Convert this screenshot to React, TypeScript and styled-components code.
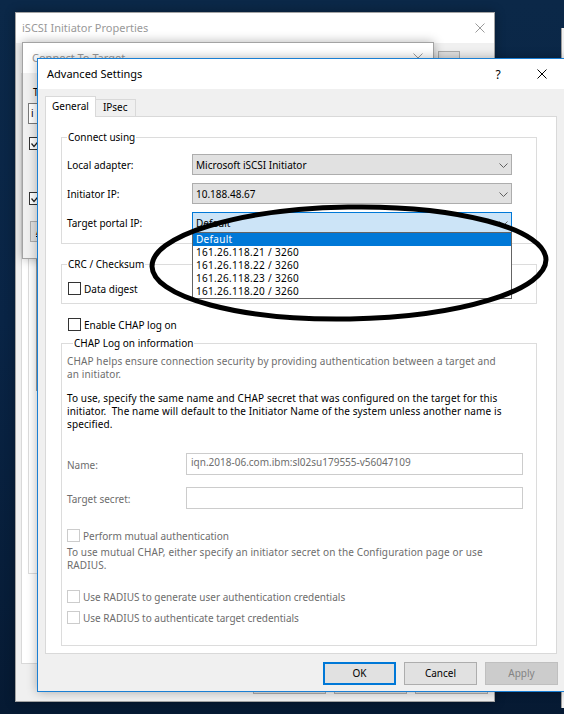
import React from 'react';
import styled, { createGlobalStyle } from 'styled-components';

const UI_FONT = `"Noto Sans", "Open Sans", "Liberation Sans", sans-serif`;

const GlobalStyle = createGlobalStyle`
  html, body { margin: 0; padding: 0; }
  body {
    background: #07203b;
    font-family: ${UI_FONT};
    font-size: 10px;
    line-height: 13px;
    color: #000;
    overflow: hidden;
  }
  *, *::before, *::after { box-sizing: border-box; }
`;

const Desktop = styled.div`
  position: relative;
  width: 564px;
  height: 714px;
  overflow: hidden;
  background: linear-gradient(180deg, #0b2848 0%, #092445 45%, #061a33 100%);
`;

const BackWindow = styled.div`
  position: absolute;
  left: 561px;
  top: 28px;
  width: 20px;
  height: 680px;
  background: #f0f0f0;
  border-left: 1px solid #9d9d9d;
`;

const Frame = styled.div<{ $x: number; $y: number; $w: number; $h: number; $active?: boolean }>`
  position: absolute;
  left: ${p => p.$x}px;
  top: ${p => p.$y}px;
  width: ${p => p.$w}px;
  height: ${p => p.$h}px;
  display: flex;
  flex-direction: column;
  background: #f0f0f0;
  border: 1px solid ${p => (p.$active ? '#1a7fd4' : '#a3a3a3')};
  box-shadow: 0 0 10px rgba(0, 0, 0, 0.3);
`;

const TitleBar = styled.div`
  flex: none;
  height: 30px;
  display: flex;
  align-items: center;
  background: #fff;
`;

const TitleText = styled.div<{ $active?: boolean; $inset: number }>`
  flex: 1;
  min-width: 0;
  padding-left: ${p => p.$inset}px;
  padding-bottom: 1px;
  font-size: 11px;
  color: ${p => (p.$active ? '#000' : '#999')};
  white-space: nowrap;
  overflow: hidden;
`;

const CaptionButton = styled.div<{ $w: number }>`
  flex: none;
  width: ${p => p.$w}px;
  height: 30px;
  display: flex;
  align-items: center;
  justify-content: center;
  font-size: 12px;
  color: #000;
`;

const CloseGlyph = ({ color }: { color: string }) => (
  <svg width="10" height="10" viewBox="0 0 10 10">
    <path d="M0.5 0.5 L9.5 9.5 M9.5 0.5 L0.5 9.5" stroke={color} strokeWidth="1" fill="none" />
  </svg>
);

const Chevron = () => (
  <svg width="9" height="5" viewBox="0 0 9 5">
    <path d="M0.5 0.5 L4.5 4.5 L8.5 0.5" stroke="#606060" strokeWidth="1" fill="none" />
  </svg>
);

const CheckMark = () => (
  <svg width="11" height="11" viewBox="0 0 11 11">
    <path d="M1.5 5.5 L4 8.5 L9.5 2" stroke="#222" strokeWidth="1.2" fill="none" />
  </svg>
);

/* ---------- shared controls ---------- */

const Box = styled.span<{ $disabled?: boolean }>`
  flex: none;
  width: 13px;
  height: 13px;
  display: inline-flex;
  align-items: center;
  justify-content: center;
  background: #fff;
  border: 1px solid ${p => (p.$disabled ? '#cccccc' : '#333333')};
`;

const CheckRow = styled.div<{ $mt?: number; $ml?: number; $disabled?: boolean }>`
  display: flex;
  align-items: center;
  gap: 3px;
  height: 13px;
  margin-top: ${p => p.$mt ?? 0}px;
  margin-left: ${p => p.$ml ?? 0}px;
  color: ${p => (p.$disabled ? '#6d6d6d' : '#000')};
  white-space: nowrap;
`;

const CheckText = styled.span`
  padding-top: 1px;
`;

const PushButton = styled.div<{ $kind?: 'default' | 'normal' | 'disabled'; $w?: number }>`
  flex: none;
  width: ${p => p.$w ?? 73}px;
  height: 23px;
  display: flex;
  align-items: center;
  justify-content: center;
  white-space: nowrap;
  background: ${p => (p.$kind === 'disabled' ? '#cccccc' : '#e1e1e1')};
  color: ${p => (p.$kind === 'disabled' ? '#838383' : '#000')};
  border: ${p =>
    p.$kind === 'default' ? '2px solid #0078d7' : p.$kind === 'disabled' ? '1px solid #bfbfbf' : '1px solid #adadad'};
`;

/* ---------- iSCSI Initiator Properties (back) ---------- */

const MainBody = styled.div`
  flex: 1;
  display: flex;
  flex-direction: column;
  padding: 8px 0 7px 5px;
`;

const MainTopRow = styled.div`
  display: flex;
  justify-content: flex-end;
  padding-right: 34px;
  height: 22px;
`;

const SmallButton = styled.div`
  width: 22px;
  height: 22px;
  border: 1px solid #adadad;
  background: #e1e1e1;
`;

const MainTabPanel = styled.div`
  flex: 1;
  display: flex;
  flex-direction: column;
  margin-right: 5px;
  padding: 20px 6px 89px 6px;
  background: #fff;
  border: 1px solid #d9d9d9;
`;

const MainGroup = styled.div`
  flex: 1;
  display: flex;
  flex-direction: column;
  padding: 20px 8px 182px 7px;
  border: 1px solid #dcdcdc;
`;

const MainList = styled.div`
  flex: 1;
  border: 1px solid #a0a0a0;
  background: #fff;
`;

const MainButtons = styled.div`
  display: flex;
  justify-content: flex-end;
  gap: 8px;
  margin-top: 7px;
  padding-right: 6px;
`;

/* ---------- Connect To Target (middle) ---------- */

const ConnectBody = styled.div`
  flex: 1;
  display: flex;
  flex-direction: column;
  align-items: flex-start;
  padding: 12px 10px 0 5px;
`;

const ConnectLabel = styled.div`
  margin-left: 5px;
  height: 14px;
  line-height: 14px;
`;

const ConnectInput = styled.div`
  margin-top: 4px;
  width: 390px;
  height: 21px;
  display: flex;
  align-items: center;
  padding-left: 2px;
  background: #fff;
  border: 1px solid #7a7a7a;
  white-space: nowrap;
`;

const ConnectButton = styled(PushButton)`
  margin-top: 16px;
  margin-left: 2px;
  width: 90px;
  height: 21px;
  justify-content: flex-start;
  padding-left: 5px;
`;

const Accel = styled.span`
  text-decoration: underline;
`;

/* ---------- Advanced Settings (front) ---------- */

const DialogBody = styled.div`
  flex: 1;
  display: flex;
  flex-direction: column;
  padding: 7px 6px 6px 7px;
`;

const TabRow = styled.div`
  display: flex;
  align-items: flex-end;
  height: 21px;
  margin-bottom: -1px;
  margin-right: 1px;
  position: relative;
  z-index: 1;
`;

const Tab = styled.div<{ $selected?: boolean }>`
  height: ${p => (p.$selected ? 21 : 18)}px;
  display: flex;
  align-items: center;
  padding: ${p => (p.$selected ? '0 6px 2px' : '0 7px 1px')};
  background: ${p => (p.$selected ? '#fff' : '#f0f0f0')};
  border: 1px solid #d9d9d9;
  border-bottom: ${p => (p.$selected ? 'none' : '1px solid #d9d9d9')};
  border-left: ${p => (p.$selected ? '1px solid #d9d9d9' : 'none')};
`;

const TabPanel = styled.div`
  flex: 1;
  display: flex;
  flex-direction: column;
  margin-right: 1px;
  padding: 13px 19px 0 15px;
  background: #fff;
  border: 1px solid #d9d9d9;
`;

const Group = styled.fieldset<{ $mt?: number; $pt: number; $pb: number; $pr: number }>`
  margin: ${p => p.$mt ?? 0}px 0 0 0;
  padding: ${p => p.$pt}px ${p => p.$pr}px ${p => p.$pb}px 5px;
  border: 1px solid #dcdcdc;
  min-width: 0;
`;

const Legend = styled.legend<{ $indent?: number }>`
  padding: 0 1px;
  margin-left: ${p => p.$indent ?? 0}px;
  font-size: 10px;
  line-height: 14px;
  color: #000;
`;

const FieldRow = styled.div<{ $label: number; $mt?: number }>`
  display: grid;
  grid-template-columns: ${p => p.$label}px auto;
  justify-content: start;
  align-items: center;
  margin-top: ${p => p.$mt ?? 0}px;
`;

const FieldLabel = styled.span<{ $muted?: boolean }>`
  padding-top: 2px;
  color: ${p => (p.$muted ? '#6d6d6d' : '#000')};
  white-space: nowrap;
`;

const Combo = styled.div<{ $focused?: boolean }>`
  position: relative;
  width: 320px;
  height: 21px;
  display: flex;
  align-items: center;
  padding: 1px 3px 0 3px;
  background: ${p => (p.$focused ? '#cce4f7' : '#e1e1e1')};
  border: 1px solid ${p => (p.$focused ? '#0078d7' : '#adadad')};
`;

const ComboValue = styled.span`
  flex: 1;
  white-space: nowrap;
`;

const PopupList = styled.ul`
  position: absolute;
  left: -1px;
  top: 19px;
  width: 320px;
  margin: 0;
  padding: 0;
  list-style: none;
  background: #fff;
  border: 1px solid #646464;
  z-index: 5;
`;

const PopupItem = styled.li<{ $selected?: boolean }>`
  height: 13px;
  line-height: 13px;
  padding-left: 3px;
  white-space: nowrap;
  letter-spacing: 0.3px;
  background: ${p => (p.$selected ? '#0078d7' : 'transparent')};
  color: ${p => (p.$selected ? '#fff' : '#000')};
`;

const Note = styled.p<{ $muted?: boolean; $mt?: number }>`
  margin: ${p => p.$mt ?? 0}px 0 0 0;
  color: ${p => (p.$muted ? '#6d6d6d' : '#000')};
  line-height: 13px;
  letter-spacing: 0.12px;
  white-space: nowrap;
`;

const TextBox = styled.div`
  width: 337px;
  height: 22px;
  padding: 2px 0 0 4px;
  background: #fff;
  border: 1px solid #cccccc;
  color: #6d6d6d;
  white-space: nowrap;
  overflow: hidden;
`;

const DialogButtons = styled.div`
  display: flex;
  justify-content: flex-end;
  gap: 8px;
  margin-top: 8px;
`;

const Annotation = styled.svg`
  position: absolute;
  left: 0;
  top: 0;
  z-index: 20;
  pointer-events: none;
`;

const portals = ['161.26.118.21 / 3260', '161.26.118.22 / 3260', '161.26.118.23 / 3260', '161.26.118.20 / 3260'];

export default function App() {
  return (
    <>
      <GlobalStyle />
      <Desktop>
        <BackWindow />

        <Frame $x={15} $y={12} $w={480} $h={690}>
          <TitleBar>
            <TitleText $inset={6}>iSCSI Initiator Properties</TitleText>
            <CaptionButton $w={28}>
              <CloseGlyph color="#9a9a9a" />
            </CaptionButton>
          </TitleBar>
          <MainBody>
            <MainTopRow>
              <SmallButton />
            </MainTopRow>
            <MainTabPanel>
              <MainGroup>
                <MainList />
              </MainGroup>
            </MainTabPanel>
            <MainButtons>
              <PushButton />
              <PushButton />
              <PushButton />
            </MainButtons>
          </MainBody>
        </Frame>

        <Frame $x={22} $y={42} $w={412} $h={217}>
          <TitleBar>
            <TitleText $inset={9}>Connect To Target</TitleText>
            <CaptionButton $w={30}>
              <CloseGlyph color="#9a9a9a" />
            </CaptionButton>
          </TitleBar>
          <ConnectBody>
            <ConnectLabel>T</ConnectLabel>
            <ConnectInput>i</ConnectInput>
            <CheckRow $mt={13} $ml={1}>
              <Box>
                <CheckMark />
              </Box>
            </CheckRow>
            <CheckRow $mt={42} $ml={1}>
              <Box>
                <CheckMark />
              </Box>
            </CheckRow>
            <ConnectButton>
              <Accel>A</Accel>
            </ConnectButton>
          </ConnectBody>
        </Frame>

        <Frame $x={37} $y={58} $w={528} $h={634} $active>
          <TitleBar>
            <TitleText $inset={9} $active>
              Advanced Settings
            </TitleText>
            <CaptionButton $w={44}>?</CaptionButton>
            <CaptionButton $w={44}>
              <CloseGlyph color="#000" />
            </CaptionButton>
          </TitleBar>
          <DialogBody>
            <TabRow>
              <Tab $selected>General</Tab>
              <Tab>IPsec</Tab>
            </TabRow>
            <TabPanel>
              <Group $pt={10} $pb={10} $pr={24}>
                <Legend>Connect using</Legend>
                <FieldRow $label={125}>
                  <FieldLabel>Local adapter:</FieldLabel>
                  <Combo>
                    <ComboValue>Microsoft iSCSI Initiator</ComboValue>
                    <Chevron />
                  </Combo>
                </FieldRow>
                <FieldRow $label={125} $mt={8}>
                  <FieldLabel>Initiator IP:</FieldLabel>
                  <Combo>
                    <ComboValue>10.188.48.67</ComboValue>
                    <Chevron />
                  </Combo>
                </FieldRow>
                <FieldRow $label={125} $mt={8}>
                  <FieldLabel>Target portal IP:</FieldLabel>
                  <Combo $focused>
                    <ComboValue>Default</ComboValue>
                    <Chevron />
                    <PopupList>
                      <PopupItem $selected>Default</PopupItem>
                      {portals.map(p => (
                        <PopupItem key={p}>{p}</PopupItem>
                      ))}
                    </PopupList>
                  </Combo>
                </FieldRow>
              </Group>

              <Group $mt={13} $pt={11} $pb={8} $pr={24}>
                <Legend>CRC / Checksum</Legend>
                <CheckRow $ml={1}>
                  <Box />
                  <CheckText>Data digest</CheckText>
                </CheckRow>
              </Group>

              <CheckRow $mt={14} $ml={7}>
                <Box />
                <CheckText>Enable CHAP log on</CheckText>
              </CheckRow>

              <Group $mt={5} $pt={5} $pb={21} $pr={13}>
                <Legend $indent={6}>CHAP Log on information</Legend>
                <Note $muted>
                  CHAP helps ensure connection security by providing authentication between a target and
                  <br />
                  an initiator.
                </Note>
                <Note $mt={11}>
                  To use, specify the same name and CHAP secret that was configured on the target for this
                  <br />
                  initiator.&nbsp; The name will default to the Initiator Name of the system unless another name is
                  <br />
                  specified.
                </Note>
                <FieldRow $label={119} $mt={22}>
                  <FieldLabel $muted>Name:</FieldLabel>
                  <TextBox>iqn.2018-06.com.ibm:sl02su179555-v56047109</TextBox>
                </FieldRow>
                <FieldRow $label={119} $mt={12}>
                  <FieldLabel $muted>Target secret:</FieldLabel>
                  <TextBox />
                </FieldRow>
                <CheckRow $mt={20} $disabled>
                  <Box $disabled />
                  <CheckText>Perform mutual authentication</CheckText>
                </CheckRow>
                <Note $muted $mt={4}>
                  To use mutual CHAP, either specify an initiator secret on the Configuration page or use
                  <br />
                  RADIUS.
                </Note>
                <CheckRow $mt={18} $disabled>
                  <Box $disabled />
                  <CheckText>Use RADIUS to generate user authentication credentials</CheckText>
                </CheckRow>
                <CheckRow $mt={8} $disabled>
                  <Box $disabled />
                  <CheckText>Use RADIUS to authenticate target credentials</CheckText>
                </CheckRow>
              </Group>
            </TabPanel>
            <DialogButtons>
              <PushButton $kind="default">OK</PushButton>
              <PushButton>Cancel</PushButton>
              <PushButton $kind="disabled">Apply</PushButton>
            </DialogButtons>
          </DialogBody>
        </Frame>

        <Annotation width="564" height="714" viewBox="0 0 564 714">
          <ellipse
            cx="349"
            cy="263"
            rx="197"
            ry="56"
            transform="rotate(-1 349 263)"
            fill="none"
            stroke="#000"
            strokeWidth="5"
          />
        </Annotation>
      </Desktop>
    </>
  );
}
